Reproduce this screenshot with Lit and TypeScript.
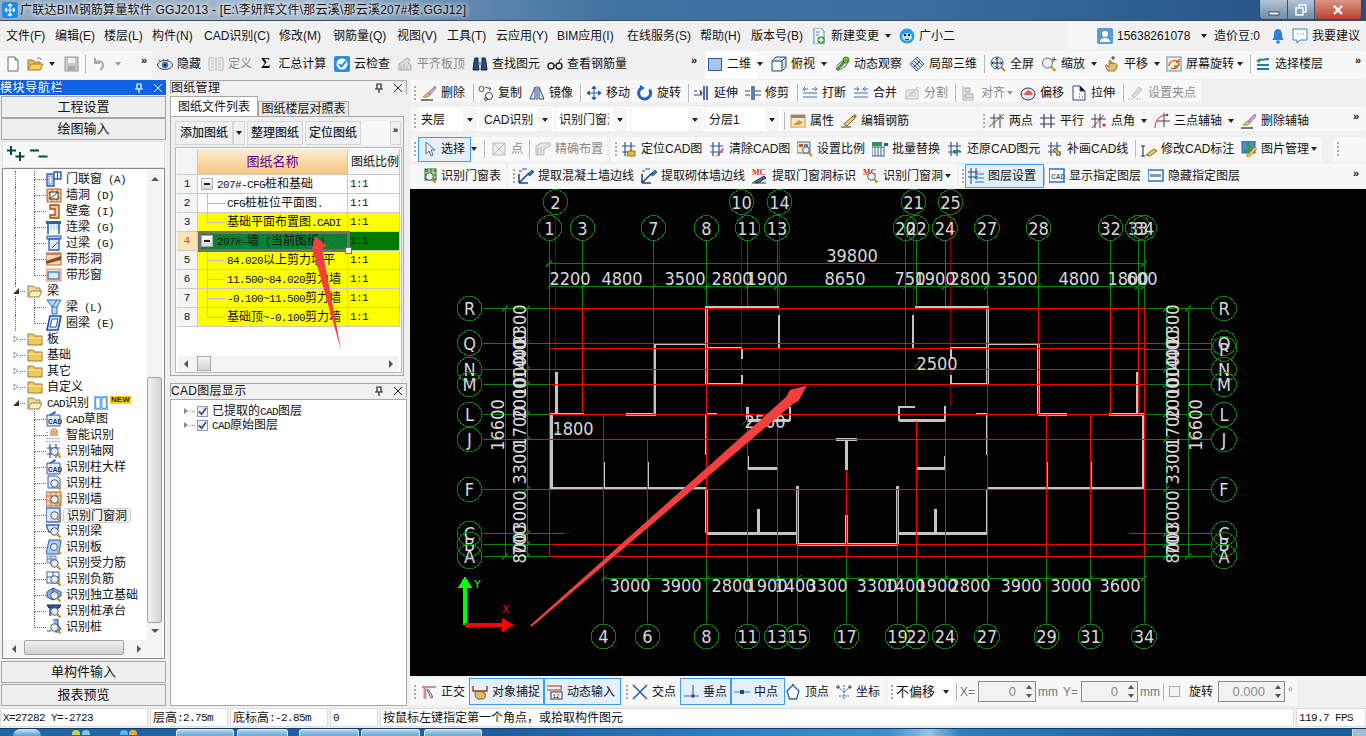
import { LitElement, html, svg, css, nothing } from 'lit';
import { customElement } from 'lit/decorators.js';

// ---- icons, all on a 16x16 box ----
const MAG = svg`<circle cx="8.5" cy="8.5" r="3.8" fill="#e4f1fb" stroke="#556"/><path d="M11.5 11.5l3 3" stroke="#d08a20" stroke-width="2.2"/>`;
const BRUSH = svg`<path d="M14 1L7 8l2 2 6-7z" fill="#c9a2d8" stroke="#6a4a8a" stroke-width=".6"/><path d="M7 8c-2 0-3 2-5 4 3 1 6 0 7-2z" fill="#e8b860" stroke="#8a6a2a" stroke-width=".6"/><path d="M0 15h12" stroke="#224" stroke-width="1.2"/>`;
const GRID = svg`<path d="M4 1v14M10 1v14M1 5h13M1 11h13" stroke="#33558f" stroke-width="1.2" fill="none"/>`;

const ICONS: Record<string, unknown> = {
  app: svg`<rect x="0" y="0" width="16" height="16" rx="3" fill="#1c8ce8"/><path d="M8 2v12M3 8h10M8 2L6 4M8 2l2 2M3 8l2-2M3 8l2 2M13 8l-2-2M13 8l-2 2M8 14l-2-2M8 14l2-2" stroke="#fff" stroke-width="1.2" fill="none"/>`,
  doc: svg`<path d="M3 1h7l3 3v11H3z" fill="#fff" stroke="#667"/><path d="M10 1v3h3" fill="#dde" stroke="#667"/>`,
  open: svg`<path d="M1 14V4h5l1 2h6v2" fill="#e8c060" stroke="#a07820"/><path d="M1 14l3-6h12l-3 6z" fill="#f6cf63" stroke="#a07820"/><path d="M10 3c2-2 4-1 4 1" stroke="#3a6ad0" fill="none"/>`,
  save: svg`<rect x="2" y="1" width="13" height="14" fill="#c8c8c8" stroke="#999"/><rect x="5" y="2" width="7" height="5" fill="#eee"/><rect x="5" y="10" width="7" height="5" fill="#aaa"/>`,
  undo: svg`<path d="M4 2v5h5M4 7c3-3 8-2 8 2 0 2-1 4-3 5" stroke="#aaa" stroke-width="2" fill="none"/>`,
  eye: svg`<ellipse cx="8" cy="9" rx="7.5" ry="4.5" fill="#dfe7f0" stroke="#445"/><circle cx="8" cy="9" r="3.2" fill="#3a77b8"/><circle cx="8" cy="9" r="1.3" fill="#123"/><path d="M2 4l2 2M6 3l1 2M11 3l-1 2" stroke="#445"/>`,
  define: svg`<rect x="1" y="2" width="14" height="12" fill="#eee" stroke="#bbb"/><path d="M8 2v12M3 5h3M3 8h3M3 11h3M10 5h3M10 8h3M10 11h3" stroke="#bbb"/>`,
  cloud: svg`<rect x="0" y="0" width="16" height="16" rx="2" fill="#2b8fdc"/><circle cx="8" cy="8" r="5.5" fill="#fff"/><path d="M5 8l2.5 2.5L12 5" stroke="#2b8fdc" stroke-width="2" fill="none"/>`,
  alignTop: svg`<path d="M2 14V8l8-6 3 2-2 3 3 2v5z" fill="#ddd" stroke="#aaa"/><path d="M4 14V9M7 14V8M10 14v-4" stroke="#aaa"/>`,
  binoc: svg`<path d="M3 2h3v4l1 8H1l1-8zM10 2h3l1 4 1 8H9l1-8z" fill="#2c4c86" stroke="#123"/><rect x="6" y="6" width="4" height="3" fill="#6a8ac0"/>`,
  glasses: svg`<circle cx="4" cy="10" r="3" fill="none" stroke="#222" stroke-width="1.4"/><circle cx="12" cy="10" r="3" fill="none" stroke="#222" stroke-width="1.4"/><path d="M7 10c1-1 1-1 2 0M12 7c0-3 1-4 3-4" stroke="#222" fill="none"/>`,
  sq2d: svg`<rect x="1.5" y="2.5" width="13" height="12" fill="#a9c4ee" stroke="#2a5fb0"/>`,
  cube: svg`<path d="M1 5l4-4h10v10l-4 4H1z" fill="#cfe0ef" stroke="#3a4f66"/><path d="M1 5h10v10M11 5l4-4" fill="none" stroke="#3a4f66"/><rect x="2" y="6" width="8" height="8" fill="#f2f7fb"/>`,
  orbit: svg`<path d="M3 14L12 4" stroke="#4a9a30" stroke-width="3"/><circle cx="12" cy="4" r="3" fill="#8cc63f" stroke="#3a7020"/><ellipse cx="8" cy="9" rx="7" ry="3" fill="none" stroke="#667" transform="rotate(-40 8 9)"/>`,
  local3: svg`<path d="M8 1l7 7-7 7-7-7z" fill="#dbe6f3" stroke="#3a5a8a"/><path d="M4 4l8 8M12 4l-8 8M6 2l8 8M2 6l8 8" stroke="#3a5a8a"/>`,
  full: svg`<circle cx="7" cy="7" r="6" fill="#dfeaf7" stroke="#35578f"/><path d="M7 2v10M2 7h10M7 2L5.5 3.5M7 2l1.5 1.5M7 12l-1.5-1.5M7 12l1.5-1.5M2 7l1.5-1.5M2 7l1.5 1.5M12 7l-1.5-1.5M12 7l-1.5 1.5" stroke="#234" fill="none"/><path d="M11 11l4 4" stroke="#b98a30" stroke-width="2"/>`,
  zoom: svg`<circle cx="6.5" cy="7" r="5" fill="#e9f3fb" stroke="#667"/><path d="M10 10.5l4.5 4.5" stroke="#c89a30" stroke-width="2.4"/><path d="M13 1v5M10.5 3.5h5" stroke="#555"/>`,
  hand: svg`<path d="M4 15c-2-3-3-5-2-6s2 1 3 2V5c0-1 2-1 2 0v3-1c0-1 2-1 2 0v1c0-1 2-1 2 0 0-1 2 0 2 1v3l-2 3z" fill="#e0bc70" stroke="#7a5a20" stroke-width=".7"/><path d="M9 0v4M7 2h4" stroke="#334"/>`,
  scrot: svg`<rect x="1" y="1" width="14" height="14" fill="#f6f0d0" stroke="#5a8ac0"/><path d="M3 10c0-5 6-7 10-4M13 6l0-3M13 6l-3 0M13 7c0 4-4 7-8 5" stroke="#e04030" stroke-width="1.3" fill="none"/><rect x="8" y="9" width="4" height="3" fill="#5ab040"/>`,
  floors: svg`<path d="M4 3l10-1v2L4 5zM2 8h12v2H2zM2 12h12v2H2z" fill="#1f7fa0"/><path d="M5 2L1 5l4 2z" fill="#2ca040"/>`,
  newchg: svg`<path d="M3 0h7l3 3v13H3z" fill="#fff" stroke="#3a80d0"/><circle cx="10" cy="12" r="3.8" fill="#48a030"/><path d="M10 9.5v5M7.5 12h5" stroke="#fff" stroke-width="1.4"/><path d="M5 4h4M5 7h3" stroke="#3a80d0"/>`,
  xiao: svg`<circle cx="8" cy="8" r="7.5" fill="#2a9de8"/><ellipse cx="8" cy="9" rx="5" ry="4" fill="#bfe6fb"/><circle cx="6" cy="7" r="1.2" fill="#123"/><circle cx="10" cy="7" r="1.2" fill="#123"/><path d="M6 11c1 1 3 1 4 0" stroke="#123" fill="none"/>`,
  user: svg`<rect x="0" y="0" width="16" height="16" rx="2" fill="#5b9bd5"/><circle cx="8" cy="6" r="3" fill="#fff"/><path d="M3 14c0-3 3-4 5-4s5 1 5 4z" fill="#fff"/>`,
  bell: svg`<path d="M8 1c-3 0-4 3-4 6 0 3-1 4-2 5h12c-1-1-2-2-2-5 0-3-1-6-4-6z" fill="#2b7fe0"/><circle cx="8" cy="14" r="1.8" fill="#2b7fe0"/>`,
  bubble: svg`<path d="M1 1h14v11H8l-3 3v-3H1z" fill="#fff" stroke="#3a80d0"/><path d="M5 6h1M8 6h1M11 6h1" stroke="#3a80d0"/>`,
  del: BRUSH,
  copy: svg`<circle cx="3.5" cy="4" r="2.5" fill="none" stroke="#445" /><circle cx="11" cy="11" r="3.5" fill="none" stroke="#445"/><circle cx="8" cy="14" r="1.5" fill="none" stroke="#445"/><path d="M7 2l6 2M11 2l2 2-2 2" stroke="#2a5fb0" fill="none"/>`,
  mirror: svg`<path d="M6 2L1 14h5zM10 2l5 12h-5z" fill="#dbe8f6" stroke="#2a4a80"/><path d="M8 1v14" stroke="#2a4a80"/>`,
  move: svg`<path d="M8 1v14M1 8h14M8 1L6 3.5h4zM8 15l-2-2.5h4zM1 8l2.5-2v4zM15 8l-2.5-2v4z" fill="#2a5fb0" stroke="#2a5fb0"/>`,
  rot: svg`<path d="M12.5 4.5A6 6 0 1 1 5 2.6" stroke="#2264c8" stroke-width="3" fill="none"/><path d="M3 0l5 3-5 3z" fill="#2264c8"/>`,
  extend: svg`<path d="M0 6h3M5 6h3M0 10h8" stroke="#2a4a80"/><path d="M10 1v14M13 1v14" stroke="#2a4a80" stroke-width="1.6"/><path d="M9 8l-3-2v4z" fill="#2a4a80"/>`,
  trim: svg`<path d="M0 6h5M0 10h5M10 6h6M10 10h6" stroke="#2a4a80"/><path d="M7 1v14M9 1v14" stroke="#2a4a80" stroke-width="1.4"/>`,
  brk: svg`<path d="M1 4h5M10 4h5M1 12h14M1 8h14" stroke="#3a70b8"/><path d="M3 2L1 4l2 2M13 2l2 2-2 2" stroke="#3a70b8" fill="none"/>`,
  merge: svg`<path d="M1 4h5M10 4h5M1 12h14M1 8h14" stroke="#3a70b8"/><path d="M4 2l2 2-2 2M12 2l-2 2 2 2" stroke="#3a70b8" fill="none"/>`,
  split: svg`<path d="M1 14L14 2M2 5h12v9H2z" fill="#eee" stroke="#bbb"/><path d="M5 8h7M5 11h7" stroke="#bbb"/>`,
  algn: svg`<path d="M2 1v14h11" stroke="#aaa" fill="none"/><rect x="4" y="3" width="5" height="4" fill="#ddd" stroke="#aaa"/><rect x="4" y="9" width="8" height="4" fill="#ddd" stroke="#aaa"/>`,
  offset: svg`<ellipse cx="8" cy="9" rx="7" ry="6" fill="#d8e8f4" stroke="#2a3a50"/><path d="M4 10c0-2 2-2 2-3 1-2 4-2 5 0 1 0 2 1 1 3z" fill="#e85a4a"/>`,
  stretch: svg`<path d="M2 15V1h7l5 5v9z" fill="#fff" stroke="#2a4a80"/><path d="M9 1v5h5M8 9h1M8 12h1M11 12h1" stroke="#2a4a80"/>`,
  clamp: svg`<path d="M4 11l7-9 3 3-8 8z" fill="#ddd" stroke="#bbb"/><path d="M0 14h5M8 14h7" stroke="#bbb" stroke-dasharray="2 1"/>`,
  attr: svg`<rect x="1" y="2" width="14" height="12" fill="#fde8c0" stroke="#e09030"/><rect x="1" y="2" width="14" height="3" fill="#888"/><path d="M3 12l6-5 3 2 2-1-4 4H3z" fill="#c79a40"/>`,
  edit: svg`<path d="M3 11L12 3l2 2-8 8z" fill="#e8d080" stroke="#7a6020"/><path d="M0 14h10" stroke="#333"/><path d="M12 3l2-2 2 2-2 2z" fill="#d06050"/>`,
  twopt: svg`<path d="M0 14L15 1" stroke="#e02020"/><path d="M5 1v14M11 1v14M1 5h14" stroke="#30406a"/><circle cx="5" cy="10" r="1.4" fill="#58a030"/><circle cx="11" cy="5" r="1.4" fill="#58a030"/>`,
  para: svg`<path d="M4 1v14M11 1v14M0 5h15M0 11h15" stroke="#30406a" stroke-width="1.2"/>`,
  pangle: svg`<path d="M1 15L13 2" stroke="#e02020"/><path d="M4 1v14M9 1v14M0 6h15" stroke="#30406a"/><circle cx="13" cy="12" r="1.6" fill="#e02020"/>`,
  three: svg`<path d="M1 15C1 7 6 2 13 2" stroke="#e02020" fill="none"/><path d="M10 0v14M3 8h13" stroke="#30406a"/><circle cx="13" cy="2" r="1.3" fill="#e02020"/>`,
  cursor: svg`<path d="M5 1v12l3-3 2 5 2-1-2-5h4z" fill="#eef3fa" stroke="#5a6a80"/>`,
  point: svg`<rect x="2" y="2" width="12" height="12" fill="#eee" stroke="#bbb"/><path d="M2 2l12 12M14 2L2 14" stroke="#bbb"/>`,
  place: svg`<path d="M1 14V5l5-3h9v3L9 8v6z" fill="#e4e4e4" stroke="#bbb"/><path d="M3 14V7M6 14V6" stroke="#bbb"/>`,
  locate: svg`${GRID}<path d="M7 10h7v5H6z" fill="#e8b840" stroke="#9a7010"/>`,
  clear: svg`${GRID}<path d="M8 14l6-7 1 1-6 7z" fill="#c04080"/><path d="M7 14l2 1-3 1z" fill="#e8b840"/>`,
  scale: svg`<rect x="0" y="1" width="13" height="11" fill="#f0e8b8" stroke="#4a70a8"/><rect x="2" y="3" width="4" height="3" fill="#d05040"/><rect x="7" y="3" width="4" height="3" fill="#4a8ad0"/><circle cx="9" cy="9" r="3.3" fill="#e4f1fb" stroke="#556"/><path d="M11.5 11.5l3.5 3.5" stroke="#d08a20" stroke-width="2"/>`,
  batch: svg`<rect x="0" y="6" width="12" height="9" fill="#fff" stroke="#3a5a8a"/><path d="M3 6v9M6 6v9M9 6v9" stroke="#3a5a8a"/><rect x="0" y="1" width="10" height="4" fill="#2a9a50"/><path d="M12 2h4v3h-4z" fill="#3a5a8a"/>`,
  restore: svg`${GRID}<path d="M7 12c1-3 5-3 7-1M7 12l0-3M7 12l3 0" stroke="#209030" stroke-width="1.6" fill="none"/>`,
  redraw: svg`${GRID}<path d="M8 7l6 6-2 2-6-6z" fill="#e0b060" stroke="#7a5a20"/>`,
  modify: svg`<path d="M2 5v10M0 5h4M0 15h4" stroke="#222"/><path d="M5 14l8-6 3 2-7 5z" fill="#e8c860" stroke="#8a6a10"/>`,
  pic: svg`<rect x="1" y="0" width="13" height="12" fill="#4a8ad0" stroke="#2a5fb0"/><circle cx="7" cy="4" r="2.4" fill="#3a9a40"/><path d="M3 11c0-3 2-4 4-4s4 1 4 4z" fill="#3a9a40"/><path d="M6 14L14 6l2 2-8 8H5z" fill="#f0c040" stroke="#9a7010" stroke-width=".6"/>`,
  ident: svg`<rect x="4" y="1" width="11" height="11" fill="#58a848" stroke="#2a7030"/><path d="M8 1v11M12 1v11M4 5h11M4 9h11" stroke="#cfe8c8"/>${MAG}`,
  extr: svg`<path d="M1 15V6M1 15h9M1 15L11 5" stroke="#22468a" stroke-width="1.6" fill="none"/><path d="M11 5l3-3 2 2-3 3-2 1z" fill="#2a7fd0" stroke="#123" stroke-width=".6"/><path d="M4 1h5M1 3h3" stroke="#22468a"/>`,
  mc: svg`<text x="0" y="7" font-size="8" font-weight="700" fill="#d03020" font-family="Liberation Serif">MC</text><path d="M2 14l10-6 2 2-8 5z" fill="#4a70b0" stroke="#234"/><path d="M0 15h14" stroke="#234"/>`,
  mc2: svg`<text x="0" y="7" font-size="8" font-weight="700" fill="#d03020" font-family="Liberation Serif">MC</text>${MAG}`,
  layers: svg`<path d="M3 0v16M8 0v10M0 4h10M0 9h10" stroke="#22406e"/><path d="M7 6h9M7 10h9M7 14h9" stroke="#3a70c8"/><path d="M6 10l3-2v4z" fill="#3a70c8"/>`,
  cads: svg`<rect x="0" y="1" width="15" height="13" fill="#fff" stroke="#2a70c0" stroke-width="1.5"/><text x="2" y="10.5" font-size="6.5" font-weight="700" fill="#2a5fb0" font-family="Liberation Sans">CAD</text>`,
  cadh: svg`<rect x="0" y="2" width="15" height="11" fill="#fff" stroke="#2a70c0" stroke-width="1.5"/><rect x="2" y="6" width="11" height="3" fill="#7a98c8"/>`,
  ortho: svg`<path d="M1 3h14" stroke="#d09090" stroke-width="2"/><path d="M4 3v12" stroke="#d09090" stroke-width="3"/><path d="M7 5l5 8-2 1-4-8z" fill="#ddd" stroke="#667"/>`,
  snap: svg`<path d="M1 2v5h14V2" stroke="#b03020" stroke-width="1.4" fill="none"/><path d="M3 9c0-2 7-2 10 0 1 3 0 6-2 6H6c-2 0-3-3-3-6z" fill="#e0bc70" stroke="#7a5a20"/>`,
  dyn: svg`<path d="M0 2h15M0 6h15" stroke="#b03020"/><path d="M14 2v3" stroke="#b03020"/><rect x="4" y="8" width="11" height="7" fill="#fff" stroke="#333"/><text x="5.5" y="14" font-size="6" fill="#111" font-family="Liberation Mono">12</text>`,
  cross: svg`<path d="M1 1l14 14M15 1L1 15" stroke="#2a5fb0" stroke-width="1.6"/>`,
  perp: svg`<path d="M1 12h15M10 1v11" stroke="#3a70b8" stroke-width="1.2"/><rect x="8.5" y="10.5" width="3" height="3" fill="#22468a"/>`,
  mid: svg`<path d="M0 8h16" stroke="#7a9ad0" stroke-width="1.5"/><rect x="6" y="6" width="4" height="4" fill="#22468a"/>`,
  vertex: svg`<path d="M8 1l6 6-2.5 8h-7L2 7z" fill="#fff" stroke="#2a5fb0" stroke-width="1.3"/><rect x="7" y="0" width="2" height="2" fill="#2a5fb0"/>`,
  coord: svg`<path d="M8 1v14M8 8L2 3M8 8l6-5M3 12h10" stroke="#2a5fb0" fill="none" stroke-dasharray="2 1"/><circle cx="2" cy="3" r="1.2" fill="none" stroke="#333"/><circle cx="14" cy="3" r="1.2" fill="none" stroke="#333"/>`,
  door: svg`<path d="M1 3h7v12H1z" fill="#dce8fa" stroke="#2a5fb0" stroke-width="1.4"/><path d="M8 1h7v7H8z" fill="#f0f6fe" stroke="#2a5fb0" stroke-width="1.4"/><path d="M11.5 1v7" stroke="#2a5fb0"/><rect x="3" y="5" width="3" height="8" fill="#fff" stroke="#6a90d0"/>`,
  hole: svg`<rect x="1" y="2" width="14" height="13" fill="#f8cfa8" stroke="#b06030"/><path d="M1 6h14M1 11h14M6 2v13M11 2v13" stroke="#c87840"/><rect x="4" y="5" width="8" height="7" fill="#fff" stroke="#333"/><path d="M4 12l8-7" stroke="#333"/>`,
  niche: svg`<path d="M4 2h9v13H4v-3h5V6H4z" fill="#f6c8a0" stroke="#a04810" stroke-width="1.3"/>`,
  lnk: svg`<rect x="0" y="2" width="15" height="3" fill="#2a5fb0"/><path d="M2 5v10M13 5v10" stroke="#2a5fb0" stroke-width="1.6"/><path d="M5 5v6M8 5v6M11 5v6" stroke="#8ab0e8"/>`,
  lin: svg`<rect x="1" y="1" width="14" height="3" fill="#a8c8f0" stroke="#2a5fb0"/><path d="M3 4h10v11H3z" fill="#dce8fa" stroke="#2a5fb0" stroke-width="1.3"/><path d="M6 13l6-6" stroke="#2a5fb0"/>`,
  bhole: svg`<rect x="0" y="2" width="15" height="12" fill="#f6d8b8" stroke="#b06030"/><path d="M0 10L15 5v4L0 13z" fill="#8a4a20"/><rect x="0" y="2" width="15" height="2" fill="#c88050"/>`,
  bwin: svg`<rect x="0" y="2" width="15" height="12" fill="#fbe0c8" stroke="#d89060"/><rect x="2" y="5" width="11" height="7" fill="#dce8fa" stroke="#3a70c8" stroke-width="1.3"/>`,
  beam: svg`<path d="M1 1h14l-4 7v7H6V8z" fill="#b8d8f4" stroke="#2a70c0"/><path d="M6 8l5-7M6 8h5" stroke="#2a70c0"/>`,
  ring: svg`<path d="M4 1h11l-3 14H1z" fill="#dce8fa" stroke="#1f50a0" stroke-width="1.6"/><path d="M6 4h6l-2 8H4z" fill="#fff" stroke="#1f50a0"/>`,
  cad: svg`<path d="M1 4h13v11H1z" fill="#dfe9f6" stroke="#2a5fb0"/><path d="M3 4l6-4 1 2-6 3z" fill="#2a5fb0"/><text x="2" y="13" font-size="6.5" font-weight="700" fill="#1a2a50" font-family="Liberation Sans">CAD</text>`,
  smart: svg`<path d="M5 9V5a3 3 0 0 1 6 0v4M7 9V5a1 1 0 0 1 2 0v4" fill="none" stroke="#d07020" stroke-width="1.2"/><path d="M1 5v1M1 8v1M1 11v1M1 14v1M4 11v1M4 14v1M7 11v1M7 14v1M10 11v1M10 14v1M13 11v1M13 14v1" stroke="#3a70c8" stroke-width="1.2"/>`,
  raxis: svg`${GRID}${MAG}`,
  rcol: svg`<path d="M2 1h9l3 3v9H2z" fill="#e8eef8" stroke="#2a5fb0"/>${MAG}`,
  rwall: svg`<rect x="0" y="1" width="15" height="14" fill="#f8cfa8" stroke="#b06030"/><path d="M0 5h15M0 10h15M5 1v14M10 1v14" stroke="#c87840"/>${MAG}`,
  rdoor: svg`<rect x="0" y="1" width="14" height="14" fill="#dce8fa" stroke="#2a5fb0" stroke-width="1.3"/>${MAG}`,
  rbeam: svg`<path d="M0 2h13l-2 7H3z" fill="#dce8fa" stroke="#2a5fb0" stroke-width="1.3"/>${MAG}`,
  rslab: svg`<path d="M3 1h12l-2 14H0z" fill="#a8cdf0" stroke="#2a5fb0"/><circle cx="8" cy="8" r="3.5" fill="#e4f1fb" stroke="#557"/><path d="M12 12l3 3" stroke="#d08a20" stroke-width="2"/>`,
  rreb: svg`<path d="M1 1h9v7H1z" fill="#cfdff4" stroke="#6a88b8"/><path d="M5 1v7M1 4h9" stroke="#6a88b8"/>${MAG}`,
  rneg: svg`<rect x="1" y="1" width="12" height="11" fill="#fff" stroke="#2a5fb0"/><path d="M1 6h12M7 1v11" stroke="#2a5fb0"/>${MAG}`,
  rfound: svg`<path d="M7 1l8 4v4l-8 4-6-3V5z" fill="#8ab0e0" stroke="#1f50a0"/><path d="M7 1v12" stroke="#1f50a0"/>${MAG}`,
  rcap: svg`<path d="M1 2h14l-2 3H3z" fill="#2a5fb0" stroke="#123"/><path d="M4 5v8M11 5v5" stroke="#2a5fb0" stroke-width="1.6"/>${MAG}`,
  rpile: svg`<path d="M7 0h5v6l3 4-3 3h-3" fill="#8ab0e0" stroke="#1f50a0"/><path d="M1 12h4" stroke="#1f50a0"/>${MAG}`,
  columns: svg`<rect x="0" y="0" width="16" height="16" fill="#d8eafb" stroke="#2a7fd0"/><rect x="2" y="2" width="5" height="12" fill="#fff" stroke="#2a7fd0"/><rect x="9" y="2" width="5" height="12" fill="#fff" stroke="#2a7fd0"/>`,
  folderO: svg`<path d="M1 14V3h5l2 2h5v3" fill="#f0d890" stroke="#9a8050"/><path d="M1 14l3-6h11l-3 6z" fill="#fdf0c0" stroke="#9a8050"/>`,
  folderC: svg`<path d="M1 14V3h5l2 2h7v9z" fill="#f3c95a" stroke="#9a7a30"/><path d="M1 7h14" stroke="#fbe8a8"/>`,
};

const icon = (name: string, cls = 'ic') =>
  html`<svg class=${cls} viewBox="0 0 16 16">${ICONS[name] ?? nothing}</svg>`;

// old Windows-style bitmap font: latin half width, CJK full width
const sim = (s: string) =>
  s.split(/([\x20-\x7e]+)/).map((p, n) => (n % 2 ? html`<span class="lat">${p}</span>` : p));

// ---- toolbars: every item carries the x it starts at, widths come from the next x ----
type Item = { x: number; k?: string; i?: string; t?: string; off?: boolean; on?: boolean; pad?: number; white?: boolean };
type Group = { a: number; b: number; flat?: boolean; items: Item[] };

const T = (x: number, i: string, t?: string, o: Partial<Item> = {}): Item => ({ x, i, t, ...o });
const K = (x: number, k: string, t?: string, o: Partial<Item> = {}): Item => ({ x, k, t, ...o });

const ROW_TOP: Group[] = [
  { a: 0, b: 152, items: [T(5, 'doc'), T(27, 'open'), K(49, 'arrow'), T(63, 'save'), K(85, 'sep'), T(91, 'undo'), K(115, 'arrowoff'), K(141, 'more')] },
  { a: 152, b: 705, flat: true, items: [T(157, 'eye', '隐藏'), T(208, 'define', '定义', { off: true }), K(261, 'sigma', '汇总计算'), T(334, 'cloud', '云检查'), T(397, 'alignTop', '平齐板顶', { off: true }), T(472, 'binoc', '查找图元'), T(547, 'glasses', '查看钢筋量'), K(691, 'more')] },
  { a: 705, b: 1366, items: [T(705, 'sq2d', '二维', { white: true, pad: 2 }), K(757, 'arrow'), T(771, 'cube', '俯视'), K(821, 'arrow'), T(834, 'orbit', '动态观察'), T(909, 'local3', '局部三维'), K(984, 'sep'), T(990, 'full', '全屏'), T(1041, 'zoom', '缩放'), K(1091, 'arrow'), T(1104, 'hand', '平移'), K(1154, 'arrow'), T(1166, 'scrot', '屏幕旋转'), K(1237, 'arrow'), K(1250, 'sep'), T(1255, 'floors', '选择楼层'), K(1355, 'more')] },
];

const ROW_A: Group[] = [
  { a: 411, b: 1201, items: [K(414, 'grip'), T(421, 'del', '删除'), K(473, 'sep'), T(478, 'copy', '复制'), T(529, 'mirror', '镜像'), K(580, 'sep'), T(586, 'move', '移动'), T(637, 'rot', '旋转'), K(688, 'sep'), T(694, 'extend', '延伸'), T(745, 'trim', '修剪'), K(797, 'sep'), T(802, 'brk', '打断'), T(853, 'merge', '合并'), T(904, 'split', '分割', { off: true }), K(955, 'sep'), T(961, 'algn', '对齐', { off: true }), K(1007, 'arrowoff'), T(1020, 'offset', '偏移'), T(1071, 'stretch', '拉伸'), K(1123, 'sep'), T(1128, 'clamp', '设置夹点', { off: true })] },
];
const ROW_B: Group[] = [
  { a: 411, b: 978, items: [K(414, 'grip'), K(419, 'combo', '夹层'), K(479, 'combo', 'CAD识别'), K(551, 'combo', '识别门窗洞'), K(623, 'combo', ''), K(695, 'combo', '分层1'), K(769, 'sep'), T(775, 'attr', '属性'), T(826, 'edit', '编辑钢筋'), K(966, 'more')] },
  { a: 979, b: 1366, items: [K(983, 'grip'), T(989, 'twopt', '两点'), T(1040, 'para', '平行'), T(1091, 'pangle', '点角'), K(1141, 'arrow'), T(1154, 'three', '三点辅轴'), K(1228, 'arrow'), T(1241, 'del', '删除辅轴'), K(1353, 'more')] },
];
const ROW_C: Group[] = [
  { a: 411, b: 607, items: [K(414, 'grip'), T(418, 'cursor', '选择', { on: true, pad: 3 }), K(471, 'arrow'), K(484, 'sep'), T(491, 'point', '点', { off: true }), K(529, 'sep'), T(535, 'place', '精确布置', { off: true })] },
  { a: 611, b: 1322, items: [K(615, 'grip'), T(621, 'locate', '定位CAD图'), T(709, 'clear', '清除CAD图'), T(797, 'scale', '设置比例'), T(872, 'batch', '批量替换'), T(947, 'restore', '还原CAD图元'), T(1047, 'redraw', '补画CAD线'), K(1135, 'sep'), T(1141, 'modify', '修改CAD标注'), T(1241, 'pic', '图片管理'), K(1311, 'arrow')] },
  { a: 1333, b: 1366, items: [K(1337, 'grip')] },
];
const ROW_D: Group[] = [
  { a: 410, b: 506, items: [T(421, 'ident', '识别门窗表')] },
  { a: 508, b: 957, items: [K(513, 'grip'), T(518, 'extr', '提取混凝土墙边线'), T(641, 'extr', '提取砌体墙边线'), T(752, 'mc', '提取门窗洞标识'), T(863, 'mc2', '识别门窗洞'), K(945, 'arrow')] },
  { a: 959, b: 1366, items: [K(962, 'grip'), T(965, 'layers', '图层设置', { on: true, pad: 3 }), K(1044, 'sep'), T(1049, 'cads', '显示指定图层'), T(1148, 'cadh', '隐藏指定图层'), K(1353, 'more')] },
];
const ROW_BOTTOM: Group[] = [
  { a: 411, b: 621, items: [K(414, 'grip'), T(421, 'ortho', '正交'), T(469, 'snap', '对象捕捉', { on: true, pad: 3 }), T(544, 'dyn', '动态输入', { on: true, pad: 3 })] },
  { a: 623, b: 885, items: [K(626, 'grip'), T(632, 'cross', '交点'), T(680, 'perp', '垂点', { on: true, pad: 3 }), T(731, 'mid', '中点', { on: true, pad: 3 }), T(785, 'vertex', '顶点'), T(836, 'coord', '坐标')] },
];

// ---- left tree ----
type Node = { n: number; i: string; t: string; open?: boolean; last?: boolean; sel?: boolean; badge?: boolean };
const TREE: Node[] = [
  { n: 2, i: 'door', t: '门联窗 (A)' }, { n: 2, i: 'hole', t: '墙洞 (D)' }, { n: 2, i: 'niche', t: '壁龛 (I)' },
  { n: 2, i: 'lnk', t: '连梁 (G)' }, { n: 2, i: 'lin', t: '过梁 (G)' }, { n: 2, i: 'bhole', t: '带形洞' },
  { n: 2, i: 'bwin', t: '带形窗', last: true },
  { n: 1, i: 'folderO', t: '梁', open: true },
  { n: 2, i: 'beam', t: '梁 (L)' }, { n: 2, i: 'ring', t: '圈梁 (E)', last: true },
  { n: 1, i: 'folderC', t: '板' }, { n: 1, i: 'folderC', t: '基础' }, { n: 1, i: 'folderC', t: '其它' }, { n: 1, i: 'folderC', t: '自定义' },
  { n: 1, i: 'folderO', t: 'CAD识别', open: true, badge: true },
  { n: 2, i: 'cad', t: 'CAD草图' }, { n: 2, i: 'smart', t: '智能识别' }, { n: 2, i: 'raxis', t: '识别轴网' },
  { n: 2, i: 'cad', t: '识别柱大样' }, { n: 2, i: 'rcol', t: '识别柱' }, { n: 2, i: 'rwall', t: '识别墙' },
  { n: 2, i: 'rdoor', t: '识别门窗洞', sel: true }, { n: 2, i: 'rbeam', t: '识别梁' }, { n: 2, i: 'rslab', t: '识别板' },
  { n: 2, i: 'rreb', t: '识别受力筋' }, { n: 2, i: 'rneg', t: '识别负筋' }, { n: 2, i: 'rfound', t: '识别独立基础' },
  { n: 2, i: 'rcap', t: '识别桩承台' }, { n: 2, i: 'rpile', t: '识别桩', last: true },
];

const SHEETS: { t: string; kind: string; yellow?: boolean; cur?: boolean }[] = [
  { t: '207#-CFG桩和基础', kind: 'root' },
  { t: 'CFG桩桩位平面图.', kind: 'mid' },
  { t: '基础平面布置图.CADI', kind: 'last', yellow: true },
  { t: '207#-墙 (当前图纸)', kind: 'root', cur: true },
  { t: '84.020以上剪力墙平', kind: 'mid', yellow: true },
  { t: '11.500~84.020剪力墙', kind: 'mid', yellow: true },
  { t: '-0.100~11.500剪力墙', kind: 'mid', yellow: true },
  { t: '基础顶~-0.100剪力墙', kind: 'last', yellow: true },
];

// ---- drawing: coordinates are page pixels, the viewBox starts at the canvas corner ----
const GREEN = '#0a820a';
const RED = '#ff0000';
const DARK = '#8c0000';
const WALL = '#c4c4c4';
const L = 549, R = 1144;

const H_AXES: [string, number][] = [['R', 308.5], ['Q', 343], ['N', 369.5], ['M', 384.5], ['L', 414.5], ['J', 439.5], ['F', 489.5], ['C', 533.5], ['B', 544.5], ['A', 556.5]];
const RIGHT_EXTRA: [string, number][] = [['P', 349]];
const TOP_LOW: [string, number][] = [['1', 549.5], ['3', 582.5], ['7', 653.5], ['8', 706.5], ['11', 747.5], ['13', 777], ['20', 905.5], ['22', 916.5], ['24', 945], ['27', 987], ['28', 1038.5], ['32', 1110.5], ['33', 1138], ['34', 1144]];
const TOP_HIGH: [string, number][] = [['2', 555.5], ['10', 741.5], ['14', 779.5], ['21', 913.5], ['25', 950.5]];
const BOTTOM: [string, number][] = [['4', 603.5], ['6', 647.5], ['8', 706.5], ['11', 747.5], ['13', 777], ['15', 797.5], ['17', 846.5], ['19', 897.5], ['22', 916.5], ['24', 945], ['27', 987], ['29', 1046.5], ['31', 1090.5], ['34', 1144]];

const RED_V: [number, number, number][] = [[549.5, 308, 556], [582.5, 308, 414], [603.5, 414, 556], [647.5, 439, 556], [653.5, 308, 414], [706.5, 308, 556], [747.5, 414, 556], [777, 423, 556], [797.5, 489, 556], [846.5, 470, 556], [897.5, 489, 556], [905.5, 308, 406], [916.5, 421, 556], [945, 421, 556], [987, 308, 556], [1038.5, 308, 414], [1046.5, 414, 556], [1090.5, 414, 556], [1110.5, 308, 414], [1138, 308, 414], [1144, 308, 556]];
const DARK_V: [number, number][] = [[555.5, 414], [741.5, 414], [779.5, 414], [913.5, 316], [950.5, 406]];

const WALLS: [number, number, number, number, number][] = [
  [705, 307, 779, 307, 3], [706, 306, 706, 385, 3], [706, 348, 742, 348, 2], [706, 384, 742, 384, 2], [741.5, 348, 741.5, 359, 2], [741.5, 375, 741.5, 384, 2],
  [779, 315, 779, 349, 2], [654, 344, 706, 344, 2.5], [654, 344, 654, 414, 3], [626, 414.5, 656, 414.5, 2.5],
  [556, 372, 556, 414, 3], [550, 414, 584, 414, 2.5], [551, 414, 551, 489, 3], [706, 414, 717, 414, 2], [706, 414, 706, 455, 2.5],
  [747.5, 407, 747.5, 421, 2.5], [747, 420.5, 790, 420.5, 2.5], [790, 407, 790, 421, 2.5],
  [550, 488.5, 706, 488.5, 3], [603.5, 462, 603.5, 489, 2], [647.5, 462, 647.5, 489, 2], [706.5, 489, 706.5, 533, 2.5],
  [706, 533.5, 797, 533.5, 3], [758.5, 509, 758.5, 533, 3], [747, 468.5, 778, 468.5, 2.5], [747.5, 456, 747.5, 468, 2],
  [797.5, 486, 797.5, 545, 2.5], [797, 544.5, 898, 544.5, 3], [836, 439.5, 857, 439.5, 2.5], [846.5, 439, 846.5, 470, 3], [846.5, 515, 846.5, 545, 3],
  [915, 307, 987, 307, 3], [987, 306, 987, 385, 3], [913, 315, 913, 349, 2], [950, 348, 987, 348, 2], [950, 384, 987, 384, 2], [950.5, 348, 950.5, 358, 2], [950.5, 375, 950.5, 384, 2],
  [987, 344, 1038, 344, 2.5], [1038.5, 344, 1038.5, 414, 3], [1038, 414.5, 1067, 414.5, 2.5], [1137, 372, 1137, 414, 3], [1109, 414.5, 1144, 414.5, 2.5], [1143, 414, 1143, 489, 3],
  [976, 414, 987, 414, 2], [987, 414, 987, 455, 2.5], [899, 407, 915, 407, 2.5], [899, 406, 899, 421, 2.5], [899, 420.5, 945, 420.5, 2.5], [945, 406, 945, 421, 2.5],
  [916, 468.5, 945, 468.5, 2.5], [945, 456, 945, 468, 2], [935, 509, 935, 533, 3], [897.5, 486, 897.5, 545, 2.5], [897, 533.5, 987, 533.5, 3], [987, 489, 987, 533, 2.5], [987, 488.5, 1144, 488.5, 3],
  [1046.5, 462, 1046.5, 489, 2], [1090.5, 462, 1090.5, 489, 2],
];

const DIM_TOP: [string, number][] = [['2200', 570], ['4800', 622], ['3500', 685], ['2800', 732], ['1900', 767], ['8650', 845], ['750', 910], ['1900', 935], ['2800', 970], ['3500', 1017], ['4800', 1079], ['1800', 1128], ['600', 1142]];
const DIM_BOT: [string, number][] = [['3000', 630], ['3900', 681], ['2800', 732], ['1900', 767], ['1400', 795], ['3300', 827], ['3300', 877], ['1400', 905], ['1900', 937], ['2800', 970], ['3900', 1021], ['3000', 1071], ['3600', 1120]];
const DIM_SIDE: [string, number][] = [['2300', 325], ['400', 345], ['1400', 359], ['1000', 377], ['2000', 399], ['1700', 427], ['3300', 464], ['3000', 511], ['700', 540], ['800', 548]];

const poly = (cx: number, cy: number, r = 12.5) =>
  Array.from({ length: 12 }, (_, n) => {
    const a = (n * Math.PI) / 6 + Math.PI / 12;
    return `${(cx + r * Math.cos(a)).toFixed(1)},${(cy + r * Math.sin(a)).toFixed(1)}`;
  }).join(' ');

const line = (x1: number, y1: number, x2: number, y2: number, c: string, w = 1) =>
  svg`<line x1=${x1} y1=${y1} x2=${x2} y2=${y2} stroke=${c} stroke-width=${w}/>`;
const tick = (x: number, y: number) => line(x - 3, y + 3, x + 3, y - 3, GREEN);
const bubble = (t: string, cx: number, cy: number) => svg`
  <polygon points=${poly(cx, cy)} fill="none" stroke=${GREEN}/>
  <text class="cad" x=${cx} y=${cy + 6.5} text-anchor="middle">${t}</text>`;
const dim = (t: string, x: number, y: number) =>
  svg`<text class="cad" x=${x} y=${y} text-anchor="middle">${t}</text>`;
const dimV = (t: string, x: number, y: number) =>
  svg`<text class="cad" x=${x} y=${y} text-anchor="middle" transform="rotate(-90 ${x} ${y})">${t}</text>`;

@customElement('app-root')
export class AppRoot extends LitElement {
  static styles = css`
    :host {
      display: block;
      width: 1366px;
      height: 736px;
      overflow: hidden;
      position: relative;
      background: #f0f0f0;
      color: #111;
      font: 12px/16px "Liberation Sans", "Noto Sans CJK SC", sans-serif;
    }
    * { box-sizing: border-box; }
    .ic { width: 16px; height: 16px; flex: none; display: block; }
    .lat { font-family: "Liberation Mono", monospace; font-size: 11px; letter-spacing: -.6px; }

    /* title */
    .title {
      height: 21px;
      display: flex;
      align-items: center;
      padding-left: 2px;
      position: relative;
      background: linear-gradient(90deg, #8fa7c2 0, #a9bccf 300px, #5f86ae 470px, #3f729f 620px, #3b6f9f 900px, #2b5b8e 1200px, #24507f 1366px);
      border-bottom: 1px solid #3b4a5c;
    }
    .title-text { margin-left: 2px; letter-spacing: .22px; text-shadow: 0 0 5px #fff, 0 0 5px #fff; white-space: nowrap; }
    .winbtns { margin-left: auto; margin-right: 4px; height: 20px; display: flex; border: 1px solid #33465c; border-top: 0; border-radius: 0 0 4px 4px; overflow: hidden; }
    .winbtn { display: flex; align-items: center; justify-content: center; background: linear-gradient(#b4c4d6, #6d8aa8); border-left: 1px solid #3d5068; color: #fff; }
    .winbtn.min { width: 27px; border-left: 0; }
    .winbtn.max { width: 27px; }
    .winbtn.cls { width: 47px; background: linear-gradient(#dc9484, #b8432f); font-weight: 700; font-size: 13px; }

    /* menu */
    .menu { height: 29px; display: flex; align-items: center; background: #f1f1f1; white-space: nowrap; }
    .mi { flex: none; display: flex; align-items: center; gap: 4px; }
    .caret { width: 0; height: 0; border: 3px solid transparent; border-top: 4px solid #222; border-bottom: 0; flex: none; }
    .caret.off { border-top-color: #999; }
    .mi.userbox { background: #f8f8f8; height: 27px; }

    /* toolbar rows */
    .row { display: flex; background: #f0f0f0; align-items: center; white-space: nowrap; }
    .r-top { height: 29px; }
    .r-a { height: 27px; align-items: flex-start; padding-top: 1px; }
    .r-b { height: 28px; align-items: flex-start; padding-top: 1px; }
    .r-c { height: 28px; padding-top: 2px; }
    .r-d { height: 27px; }
    .grp { display: flex; align-items: center; background: #f8f8f8; border-radius: 2px; flex: none; }
    .grp.flat { background: transparent; }
    .r-top .grp { height: 28px; }
    .r-top .it { padding-bottom: 2px; }
    .r-a .grp { height: 22px; }
    .r-a .it { padding-top: 3px; }
    .r-b .grp { height: 24px; }
    .r-b .it { padding-top: 3px; }
    .r-c .grp { height: 25px; }
    .r-d .grp { height: 24px; }
    .it { flex: none; display: flex; align-items: center; gap: 4px; height: 100%; overflow: visible; }
    .it.off { color: #8a8a8a; }
    .it.on { background: #e3effb; outline: 1px solid #3f9bef; outline-offset: -1px; }
    .it.wht { background: #fff; }
    .sep::before { content: ""; display: block; width: 1px; height: 18px; background: #b8b8b8; }
    .grip { flex: none; }
    .grip::before { content: ""; display: block; width: 2px; height: 14px; background: repeating-linear-gradient(#a8a8a8 0 2px, transparent 2px 4px); }
    .it.more { font: 700 11px/10px "Liberation Sans", sans-serif; align-items: flex-start; padding-top: 4px; padding-bottom: 0; }
    .sigma { font: 700 14px/16px "Liberation Serif", serif; gap: 8px; }
    .sigma span { font: 12px/16px "Liberation Sans", "Noto Sans CJK SC", sans-serif; }
    .r-b .it.combo { background: #fff; margin-right: 3px; height: 100%; padding: 1px 2px 0; justify-content: space-between; overflow: hidden; }
    .combo .val { overflow: hidden; flex: 1; min-width: 0; }
    .combo .drop { width: 14px; height: 100%; background: #f6f6f6; display: flex; align-items: center; justify-content: center; flex: none; }

    /* main */
    .main { height: 628px; display: grid; grid-template-columns: 168px 242px 956px; }
    .nav { display: flex; flex-direction: column; }
    .panel-head { height: 15px; display: flex; align-items: center; justify-content: space-between; overflow: hidden; white-space: nowrap; flex: none; }
    .nav .panel-head { background: #0f62e4; color: #fff; width: 166px; font-size: 12px; margin-top: 1px; letter-spacing: .6px; }
    .ctl { display: flex; align-items: center; gap: 9px; padding-right: 3px; flex: none; }
    .ctl svg { width: 10px; height: 10px; display: block; }
    .navbtn { width: 165px; margin-left: 1px; height: 22px; background: #efefef; border: 1px solid #a6a6a6; display: flex; align-items: center; justify-content: center; font-size: 13px; flex: none; }
    .navbtn.first { margin-top: 1px; }
    .navbtn.gap { margin-top: 1px; }
    .navtools { height: 27px; width: 163px; margin: 1px 0 0 2px; background: #f8f8f8; border: 1px solid #e2e2e2; display: flex; align-items: center; gap: 5px; padding-left: 4px; flex: none; }
    .navtools svg { width: 18px; height: 18px; }
    .treebox { width: 163px; height: 491px; margin-left: 2px; border: 1px solid #8a8a8a; background: #fff; position: relative; overflow: hidden; flex: none; margin-bottom: 2px; }
    .tree { width: 144px; height: 472px; overflow: hidden; padding-top: 2px; }
    .node { height: 16px; position: relative; display: flex; align-items: center; white-space: nowrap; font-size: 12px; }
    .node.l1 { padding-left: 24px; gap: 4px; }
    .node.l2 { padding-left: 43px; gap: 4px; }
    .node.cutV::before { content: ""; position: absolute; left: 12px; top: 0; bottom: 0; border-left: 1px dotted #666; }
    .node.l2::after { content: ""; position: absolute; left: 31px; top: 0; width: 11px; height: 8px; border-left: 1px dotted #666; border-bottom: 1px dotted #666; }
    .node.l2.more-v .vcont { position: absolute; left: 31px; top: 8px; height: 8px; border-left: 1px dotted #666; }
    .node.l1 .stub { position: absolute; left: 13px; top: 8px; width: 9px; border-bottom: 1px dotted #666; }
    .tw { position: absolute; left: 9px; top: 4px; width: 8px; height: 8px; z-index: 1; background: #fff; }
    .seltext { border: 1px solid #d0d0d0; border-radius: 3px; background: #f4f4f4; padding: 0 3px; margin-left: -3px; height: 15px; line-height: 14px; }
    .badge { display: flex; align-items: flex-start; gap: 2px; margin-left: 1px; }
    .badge svg { width: 14px; height: 14px; }
    .new { background: #ffd400; color: #222; font: 700 8px/8px "Liberation Sans", sans-serif; padding: 0 1px; }
    .vs { position: absolute; right: 2px; top: 0; width: 15px; height: 472px; background: #f4f4f4; }
    .thumb-v { position: absolute; left: 0; top: 208px; width: 15px; height: 246px; border: 1px solid #a4a4a4; border-radius: 2px; background: linear-gradient(90deg, #f2f2f2, #d4d4d4); }
    .hs { position: absolute; left: 0; bottom: 1px; width: 160px; height: 17px; background: #f4f4f4; }
    .thumb-h { position: absolute; left: 21px; top: 0; width: 100px; height: 15px; border: 1px solid #a4a4a4; border-radius: 2px; background: linear-gradient(#f2f2f2, #cfcfcf); }
    .tri-u, .tri-d, .tri-l, .tri-r { position: absolute; width: 0; height: 0; border: 4px solid transparent; }
    .tri-u { border-bottom: 4px solid #555; border-top: 0; }
    .tri-d { border-top: 4px solid #555; border-bottom: 0; }
    .tri-l { border-right: 4px solid #555; border-left: 0; }
    .tri-r { border-left: 4px solid #555; border-right: 0; }

    .mid { display: flex; flex-direction: column; padding: 1px 0 0 2px; }
    .mid .panel-head { width: 237px; height: 14px; border: 1px solid #a8a8a8; border-width: 1px 1px 0; font-size: 12px; letter-spacing: .3px; }
    .tabs { display: flex; align-items: flex-end; height: 21px; margin-top: 1px; flex: none; }
    .tab { height: 20px; width: 88px; border: 1px solid #a8a8a8; border-bottom: 0; background: #fff; display: flex; align-items: center; justify-content: center; font-size: 12px; }
    .tab.back { width: 91px; height: 15px; background: #e9e9e9; }
    .sheets { width: 234px; height: 260px; border: 1px solid #a8a8a8; padding: 4px 2px 4px 4px; background: #f0f0f0; flex: none; }
    .sheet-tools { height: 24px; display: flex; align-items: stretch; background: #f8f8f8; gap: 2px; }
    .stb { display: flex; align-items: center; justify-content: center; background: #f0f0f0; border: 1px solid #d6d6d6; color: #111; text-shadow: 0 0 1px #8ab4e0; }
    .stb.add { width: 58px; }
    .stb.dd { width: 12px; margin-left: -2px; }
    .stb.plain { width: 56px; }
    .stb.mr { margin-left: auto; width: 11px; font: 700 9px/10px "Liberation Sans", sans-serif; align-items: flex-start; padding-top: 3px; }
    .sheet-box { margin-top: 2px; height: 226px; width: 227px; border: 1px solid #b8b8b8; background: #fff; position: relative; padding: 1px; overflow: hidden; }
    .gr { display: grid; grid-template-columns: 21px 150px 52px; height: 19px; font-size: 12px; }
    .gr.head { height: 26px; }
    .cell { border-right: 1px solid #c9c9c9; border-bottom: 1px solid #c9c9c9; display: flex; align-items: center; overflow: hidden; white-space: nowrap; position: relative; }
    .cell.idx { justify-content: center; background: #f4f4f4; font: 11px "Liberation Mono", monospace; }
    .cell.nm { background: linear-gradient(#fdeed4, #f6c680); color: #66008f; justify-content: center; font-size: 13px; }
    .cell.hr { background: #f6f6f6; padding-left: 3px; justify-content: flex-start; font-size: 12px; }
    .cell.r { padding-left: 2px; }
    .gr.yellow .name, .gr.yellow .r { background: #ffff00; }
    .gr.cur .name { background: #0a8034; }
    .gr.cur .r { background: #007a00; }
    .gr.cur .idx { background: #fde3b8; color: #c05a00; }
    .name { padding-left: 19px; }
    .name.root { padding-left: 19px; }
    .name.sub { padding-left: 29px; }
    .pm { position: absolute; left: 3px; top: 3px; width: 12px; height: 12px; border: 1px solid #b0b0b0; background: linear-gradient(#fff, #d8d8d8); z-index: 1; }
    .pm::after { content: ""; position: absolute; left: 2px; right: 2px; top: 4px; height: 2px; background: #222; }
    .name.sub::before { content: ""; position: absolute; left: 9px; width: 17px; top: 0; height: 9px; border-left: 1px solid #c0c0c0; border-bottom: 1px solid #c0c0c0; }
    .name.mid-k::after { content: ""; position: absolute; left: 9px; top: 9px; height: 10px; border-left: 1px solid #c0c0c0; }
    .curbox { position: absolute; left: 22px; top: 83px; width: 152px; height: 21px; border: 3px solid #707070; pointer-events: none; }
    .curbox::after { content: ""; position: absolute; right: -5px; bottom: -5px; width: 5px; height: 5px; border: 1px solid #707070; background: #fff; }
    .sheet-hs { position: absolute; left: 2px; right: 2px; top: 208px; height: 16px; background: #f4f4f4; }
    .sheet-thumb { position: absolute; left: 19px; top: 0; width: 14px; height: 15px; border: 1px solid #a8a8a8; background: linear-gradient(#f4f4f4, #d2d2d2); }
    .mid .head2 { margin-top: 7px; }
    .layerbox { width: 237px; height: 307px; margin-top: 2px; border: 1px solid #a8a8a8; background: #fff; padding: 4px 0 0 13px; flex: none; }
    .lr { height: 14px; display: flex; align-items: center; gap: 2px; white-space: nowrap; font-size: 12px; }
    .lr-arrow { width: 0; height: 0; border: 3px solid transparent; border-left: 4px solid #888; border-right: 0; }
    .lr-dots { width: 5px; border-bottom: 1px dotted #888; }
    .chk { width: 11px; height: 11px; border: 1px solid #8a9ab0; background: linear-gradient(135deg, #dfe6f1, #fff); display: flex; align-items: center; justify-content: center; margin-right: 2px; }
    .chk svg { width: 9px; height: 9px; }

    .work { display: flex; flex-direction: column; }
    .canvas { height: 487px; background: #000; flex: none; }
    .canvas svg { display: block; shape-rendering: crispEdges; }
    .cad { font: 18px "DejaVu Sans Condensed", "DejaVu Sans", sans-serif; font-stretch: condensed; fill: #d8d8d8; shape-rendering: auto; }
    .axis-lbl { font: 11px "DejaVu Sans", sans-serif; }

    .r-bot { height: 29px; padding-top: 2px; }
    .r-bot .grp { height: 27px; }
    .opt { display: flex; align-items: center; height: 27px; background: #f8f8f8; margin-left: 3px; width: 409px; flex: none; color: #777; }
    .opt .gp { margin-left: 3px; width: 4px; }
    .comb2 { width: 58px; height: 100%; background: #fff; color: #111; display: flex; align-items: center; justify-content: space-between; padding: 0 4px 0 1px; font-size: 13px; flex: none; }
    .spin { height: 21px; border: 1px solid #8a8a8a; background: #f2f2f2; display: flex; align-items: center; justify-content: flex-end; flex: none; position: relative; padding-right: 19px; font-size: 13px; color: #8a8a8a; }
    .spin::before { content: ""; position: absolute; right: 3px; top: 3px; border: 3px solid transparent; border-bottom: 4px solid #555; border-top: 0; }
    .spin::after { content: ""; position: absolute; right: 3px; bottom: 3px; border: 3px solid transparent; border-top: 4px solid #555; border-bottom: 0; }
    .cb { width: 11px; height: 11px; border: 1px solid #aaa; background: #f4f4f4; margin: 0 9px 0 2px; flex: none; }
    .vsep { width: 1px; height: 18px; background: #b8b8b8; flex: none; margin: 0 3px; }
    .w-x { width: 58px; }
    .w-y { width: 57px; }
    .w-r { width: 67px; }
    .lb { margin-right: 3px; }
    .mm { margin: 0 5px 0 2px; }
    .mm2 { margin-left: 2px; }
    .rot { color: #111; margin-right: 5px; }
    .deg { margin-left: 3px; }

    /* status */
    .status { height: 21px; display: flex; gap: 2px; padding-top: 1px; background: #f0f0f0; white-space: nowrap; }
    .sc { height: 19px; background: #fff; border: 1px solid #dcdcdc; display: flex; align-items: center; padding: 1px 0 0 2px; flex: none; font-size: 12px; overflow: hidden; }

    /* taskbar */
    .taskbar { height: 8px; display: flex; background: linear-gradient(90deg, #2266a6 0, #1d5e9e 500px, #2b7cc0 700px, #3e8fce 890px, #96c4e2 930px, #2f7fc0 960px, #1b5d9c 1200px, #1d5f9e 1349px); position: relative; border-top: 1px solid #0f3a68; }
    .orb { width: 28px; margin-left: 13px; background: linear-gradient(#cfe3f2, #5a9ad0); border-radius: 14px 14px 0 0; flex: none; }
    .dotg { width: 8px; height: 5px; margin-top: 1px; border-radius: 4px 4px 0 0; background: #c8d83a; flex: none; }
    .tbtn { background: linear-gradient(#b0d2ea, #6ba7d4); border: 1px solid #dceaf5; border-bottom: 0; border-radius: 3px 3px 0 0; flex: none; }
    .show { width: 14px; margin-left: auto; background: #a4bcd0; border-left: 1px solid #cfdde8; flex: none; }

    .overlay { position: absolute; left: 0; top: 0; pointer-events: none; }
  `;

  private renderItem(it: Item, w: number) {
    const style = `width:${w}px${it.pad ? `;padding-left:${it.pad}px` : ''}`;
    switch (it.k) {
      case 'sep': return html`<div class="it sep" style=${style}></div>`;
      case 'grip': return html`<div class="it grip" style=${style}></div>`;
      case 'more': return html`<div class="it more" style=${style}>»</div>`;
      case 'arrow': return html`<div class="it" style=${style}><span class="caret"></span></div>`;
      case 'arrowoff': return html`<div class="it" style=${style}><span class="caret off"></span></div>`;
      case 'sigma': return html`<div class="it sigma" style=${style}>Σ<span>${it.t}</span></div>`;
      case 'combo': return html`<div class="it combo" style=${style}><span class="val">${it.t}</span><span class="drop"><span class="caret"></span></span></div>`;
    }
    const cls = `it ${it.off ? 'off' : ''} ${it.on ? 'on' : ''} ${it.white ? 'wht' : ''}`;
    return html`<div class=${cls} style=${style}>${icon(it.i!)}${it.t ? html`<span>${it.t}</span>` : nothing}</div>`;
  }

  private renderGroups(groups: Group[], start: number) {
    let prev = start;
    return groups.map((g) => {
      const ml = g.a - prev;
      prev = g.b;
      return html`<div class="grp ${g.flat ? 'flat' : ''}" style="width:${g.b - g.a}px;margin-left:${ml}px">
        ${g.items.map((it, n) => {
          const next = n + 1 < g.items.length ? g.items[n + 1].x : g.b;
          const pad = n === 0 ? it.x - g.a : 0;
          return html`${pad ? html`<div class="it" style="width:${pad}px"></div>` : nothing}${this.renderItem(it, next - it.x)}`;
        })}
      </div>`;
    });
  }

  private renderTitle() {
    return html`<div class="title">
      ${icon('app')}
      <span class="title-text">广联达BIM钢筋算量软件 GGJ2013 - [E:\\李妍辉文件\\那云溪\\那云溪207#楼.GGJ12]</span>
      <div class="winbtns">
        <div class="winbtn min"><svg width="12" height="12" viewBox="0 0 12 12"><rect x="1" y="8" width="10" height="3" fill="#fff" stroke="#445"/></svg></div>
        <div class="winbtn max"><svg width="12" height="12" viewBox="0 0 12 12"><rect x="4" y="1" width="7" height="7" fill="none" stroke="#fff" stroke-width="1.4"/><rect x="1" y="4" width="7" height="7" fill="#8aa2ba" stroke="#fff" stroke-width="1.4"/></svg></div>
        <div class="winbtn cls"><svg width="12" height="12" viewBox="0 0 12 12"><path d="M2 2l8 8M10 2l-8 8" stroke="#fff" stroke-width="2.4"/></svg></div>
      </div>
    </div>`;
  }

  private renderMenu() {
    const entries: [string, number][] = [['文件(F)', 6], ['编辑(E)', 55], ['楼层(L)', 104], ['构件(N)', 152], ['CAD识别(C)', 204], ['修改(M)', 279], ['钢筋量(Q)', 333], ['视图(V)', 397], ['工具(T)', 447], ['云应用(Y)', 496], ['BIM应用(I)', 557], ['在线服务(S)', 627], ['帮助(H)', 700], ['版本号(B)', 751]];
    const rest: [number, unknown][] = [
      [811, html`${icon('newchg')}<span>新建变更</span>`],
      [885, html`<span class="caret"></span>`],
      [899, html`${icon('xiao')}<span>广小二</span>`],
      [1067, html`<span></span>`],
      [1097, html`${icon('user')}<span>15638261078</span>`],
      [1201, html`<span class="caret"></span>`],
      [1214, '造价豆:0'],
      [1270, icon('bell')],
      [1292, html`${icon('bubble')}<span>我要建议</span>`],
    ];
    const all: [number, unknown][] = [...entries.map(([t, x]): [number, unknown] => [x, t]), ...rest];
    return html`<div class="menu">
      <div style="width:6px;flex:none"></div>
      ${all.map(([x, c], n) => {
        const w = (n + 1 < all.length ? all[n + 1][0] : 1366) - x;
        return html`<div class="mi ${x === 1067 ? 'userbox' : ''}" style="width:${w}px">${c}</div>`;
      })}
    </div>`;
  }

  private renderNav() {
    const lastChild = new Set(TREE.filter((n) => n.last));
    return html`<div class="nav">
      <div class="panel-head"><span>模块导航栏</span>${this.ctl('#fff')}</div>
      <div class="navbtn first">工程设置</div>
      <div class="navbtn">绘图输入</div>
      <div class="navtools">
        <svg viewBox="0 0 18 18"><path d="M4 0v9M0 4.500h9M13 6v9M8.500 10.500h9" stroke="#004a46" stroke-width="2"/></svg>
        <svg viewBox="0 0 18 18"><path d="M0 4.500h9M8.500 10.500h9" stroke="#004a46" stroke-width="2"/></svg>
      </div>
      <div class="treebox">
        <div class="tree">
          ${TREE.map((n, idx) => {
            const upper = idx <= 9;
            if (n.n === 1) {
              return html`<div class="node l1 ${upper ? 'cutV' : ''}">
                <span class="stub"></span>
                <svg class="tw" viewBox="0 0 8 8">${n.open ? svg`<path d="M7 1v6H1z" fill="#333"/>` : svg`<path d="M2 1l4 3-4 3z" fill="#fff" stroke="#999"/>`}</svg>
                ${icon(n.i)}
                <span>${sim(n.t)}</span>
                ${n.badge ? html`<span class="badge">${icon('columns')}<span class="new">NEW</span></span>` : nothing}
              </div>`;
            }
            return html`<div class="node l2 ${upper ? 'cutV' : ''} ${lastChild.has(n) ? '' : 'more-v'}">
              ${lastChild.has(n) ? nothing : html`<span class="vcont"></span>`}
              ${icon(n.i)}
              <span class=${n.sel ? 'seltext' : ''}>${sim(n.t)}</span>
            </div>`;
          })}
        </div>
        <div class="vs">
          <span class="tri-u" style="left:4px;top:8px"></span>
          <div class="thumb-v"></div>
          <span class="tri-d" style="left:4px;top:460px"></span>
        </div>
        <div class="hs">
          <span class="tri-l" style="left:9px;top:5px"></span>
          <div class="thumb-h"></div>
          <span class="tri-r" style="left:134px;top:5px"></span>
        </div>
      </div>
      <div class="navbtn">单构件输入</div>
      <div class="navbtn gap">报表预览</div>
    </div>`;
  }

  private ctl(c: string) {
    return html`<span class="ctl">
      <svg viewBox="0 0 10 10"><path d="M3 1h4v5H3zM1 6h8M5 6v4" stroke=${c} stroke-width="1.2" fill="none"/></svg>
      <svg viewBox="0 0 10 10"><path d="M1 1l8 8M9 1l-8 8" stroke=${c}/></svg>
    </span>`;
  }

  private renderSheets() {
    return html`<div class="mid">
      <div class="panel-head"><span>图纸管理</span>${this.ctl('#222')}</div>
      <div class="tabs"><div class="tab">图纸文件列表</div><div class="tab back">图纸楼层对照表</div></div>
      <div class="sheets">
        <div class="sheet-tools">
          <div class="stb add">添加图纸</div>
          <div class="stb dd"><span class="caret"></span></div>
          <div class="stb plain">整理图纸</div>
          <div class="stb plain">定位图纸</div>
          <div class="stb mr">»</div>
        </div>
        <div class="sheet-box">
          <div class="gr head">
            <div class="cell idx"></div>
            <div class="cell nm">图纸名称</div>
            <div class="cell hr">图纸比例</div>
          </div>
          ${SHEETS.map((s, n) => html`<div class="gr ${s.yellow ? 'yellow' : ''} ${s.cur ? 'cur' : ''}">
            <div class="cell idx">${n + 1}</div>
            <div class="cell name ${s.kind === 'root' ? 'root' : 'sub'} ${s.kind === 'mid' ? 'mid-k' : ''}">
              ${s.kind === 'root' ? html`<span class="pm"></span>` : nothing}<span>${sim(s.t)}</span>
            </div>
            <div class="cell r">${sim('1:1')}</div>
          </div>`)}
          <div class="curbox"></div>
          <div class="sheet-hs">
            <span class="tri-l" style="left:6px;top:4px"></span>
            <div class="sheet-thumb"></div>
            <span class="tri-r" style="right:6px;top:4px"></span>
          </div>
        </div>
      </div>
      <div class="panel-head head2"><span>CAD图层显示</span>${this.ctl('#222')}</div>
      <div class="layerbox">
        ${['已提取的CAD图层', 'CAD原始图层'].map((t) => html`<div class="lr">
          <span class="lr-arrow"></span><span class="lr-dots"></span>
          <span class="chk"><svg viewBox="0 0 10 10"><path d="M1 5l3 3 5-7" stroke="#3a4aa0" stroke-width="2" fill="none"/></svg></span>
          <span>${sim(t)}</span>
        </div>`)}
      </div>
    </div>`;
  }

  private renderCanvas() {
    return html`<div class="canvas">
      <svg width="956" height="487" viewBox="410 189 956 487">
        ${H_AXES.map(([, y]) => svg`${line(483, y, L, y, GREEN)}${line(R, y, 1211, y, GREEN)}`)}
        ${line(R, 349, 1211, 349, GREEN)}
        ${TOP_LOW.map(([, x]) => line(x, 241, x, 308, GREEN))}
        ${BOTTOM.map(([, x]) => line(x, 556, x, 623, GREEN))}
        ${line(L, 263.5, R, 263.5, GREEN)}${line(L, 286.5, R, 286.5, GREEN)}${line(603, 578.5, R, 578.5, GREEN)}
        ${line(505, 308, 505, 556, GREEN)}${line(527, 308, 527, 556, GREEN)}${line(1166, 308, 1166, 556, GREEN)}${line(1188, 308, 1188, 556, GREEN)}
        ${TOP_LOW.map(([, x]) => tick(x, 286.5))}
        ${BOTTOM.map(([, x]) => tick(x, 578.5))}
        ${tick(L, 263.5)}${tick(R, 263.5)}
        ${H_AXES.map(([, y]) => svg`${tick(527, y)}${tick(1166, y)}`)}
        ${[308.5, 556.5].map((y) => svg`${tick(505, y)}${tick(1188, y)}`)}
        ${DARK_V.map(([x, y]) => line(x, 215, x, y, DARK))}
        ${WALLS.map(([a, b, c, d, w]) => line(a, b, c, d, WALL, w))}
        ${[308.5, 343, 348.5, 369.5, 384.5, 414.5, 439.5, 489.5, 544.5, 556.5].map((y) => line(L, y, R, y, RED))}
        ${line(L, 533.5, 564, 533.5, RED)}${line(1129, 533.5, R, 533.5, RED)}
        ${RED_V.map(([x, a, b]) => line(x, a, x, b, RED))}
        ${TOP_HIGH.map(([t, x]) => bubble(t, x, 202))}
        ${TOP_LOW.map(([t, x]) => bubble(t, x, 228))}
        ${BOTTOM.map(([t, x]) => bubble(t, x, 636.5))}
        ${H_AXES.map(([t, y]) => svg`${bubble(t, 469.5, y)}${bubble(t, 1224, y)}`)}
        ${RIGHT_EXTRA.map(([t, y]) => bubble(t, 1224, y))}
        ${dim('39800', 852, 262)}
        ${DIM_TOP.map(([t, x]) => dim(t, x, 285))}
        ${DIM_BOT.map(([t, x]) => dim(t, x, 592))}
        ${dim('1800', 573, 435)}${dim('2500', 765, 428)}${dim('2500', 937, 370)}
        ${tick(745, 422)}${tick(917, 364)}${tick(557, 431)}
        ${DIM_SIDE.map(([t, y]) => svg`${dimV(t, 526, y)}${dimV(t, 1179, y)}`)}
        ${dimV('16600', 504, 425)}${dimV('16600', 1202, 425)}
        ${line(465, 625, 465, 585, '#00ff00', 4)}
        <polygon points="465,576 458,588 472,588" fill="#00ff00"/>
        ${line(465, 625, 504, 625, '#ff0000', 4)}
        <polygon points="514,625 502,618 502,632" fill="#ff0000"/>
        <text class="axis-lbl" x="474" y="588" fill="#00ff00">Y</text>
        <text class="axis-lbl" x="502" y="613" fill="#ff0000">X</text>
      </svg>
    </div>`;
  }

  private renderBottom() {
    return html`<div class="row r-bot">
      ${this.renderGroups(ROW_BOTTOM, 410)}
      <div class="opt">
        <span class="gp it grip"></span>
        <div class="comb2"><span>不偏移</span><span class="caret"></span></div>
        <div class="vsep"></div>
        <span class="lb">X=</span>
        <div class="spin w-x">0</div>
        <span class="mm">mm</span>
        <span class="lb">Y=</span>
        <div class="spin w-y">0</div>
        <span class="mm2">mm</span>
        <div class="vsep"></div>
        <div class="cb"></div>
        <span class="rot">旋转</span>
        <div class="spin w-r">0.000</div>
        <span class="deg">°</span>
      </div>
    </div>`;
  }

  render() {
    return html`
      ${this.renderTitle()}
      ${this.renderMenu()}
      <div class="row r-top">${this.renderGroups(ROW_TOP, 0)}</div>
      <div class="main">
        ${this.renderNav()}
        ${this.renderSheets()}
        <div class="work">
          <div class="row r-a">${this.renderGroups(ROW_A, 410)}</div>
          <div class="row r-b">${this.renderGroups(ROW_B, 410)}</div>
          <div class="row r-c">${this.renderGroups(ROW_C, 410)}</div>
          <div class="row r-d">${this.renderGroups(ROW_D, 410)}</div>
          ${this.renderCanvas()}
          ${this.renderBottom()}
        </div>
      </div>
      <div class="status">
        <div class="sc" style="width:148px">${sim('X=27282 Y=-2723')}</div>
        <div class="sc" style="width:78px">${sim('层高:2.75m')}</div>
        <div class="sc" style="width:98px">${sim('底标高:-2.85m')}</div>
        <div class="sc" style="width:48px">${sim('0')}</div>
        <div class="sc" style="width:914px">按鼠标左键指定第一个角点，或拾取构件图元</div>
        <div class="sc" style="width:70px">${sim('119.7 FPS')}</div>
      </div>
      <div class="taskbar">
        <div class="orb"></div>
        <div class="dotg" style="margin-left:31px"></div>
        <div class="dotg" style="margin-left:2px;background:#7ec8f0"></div>
        <div class="dotg" style="margin-left:30px;background:#5ab8f0"></div>
        <div class="dotg" style="margin-left:1px;background:#f0a830"></div>
        <div class="tbtn" style="width:58px;margin-left:39px"></div>
        <div class="tbtn" style="width:51px;margin-left:3px"></div>
        <div class="tbtn" style="width:60px;margin-left:11px"></div>
        <div class="tbtn" style="width:59px;margin-left:2px"></div>
        <div class="tbtn" style="width:58px;margin-left:4px"></div>
        <div class="show"></div>
      </div>
      <svg class="overlay" width="1366" height="736" viewBox="0 0 1366 736">
        <polygon points="530,625.5 786,397 790,390 807,385.5 798.5,401 793,404 532,626.5" fill="#f43f3f"/>
        <polygon points="315,236 327,246 322,248 341,350 313,251 311.5,252" fill="#f43f3f"/>
      </svg>
    `;
  }
}
